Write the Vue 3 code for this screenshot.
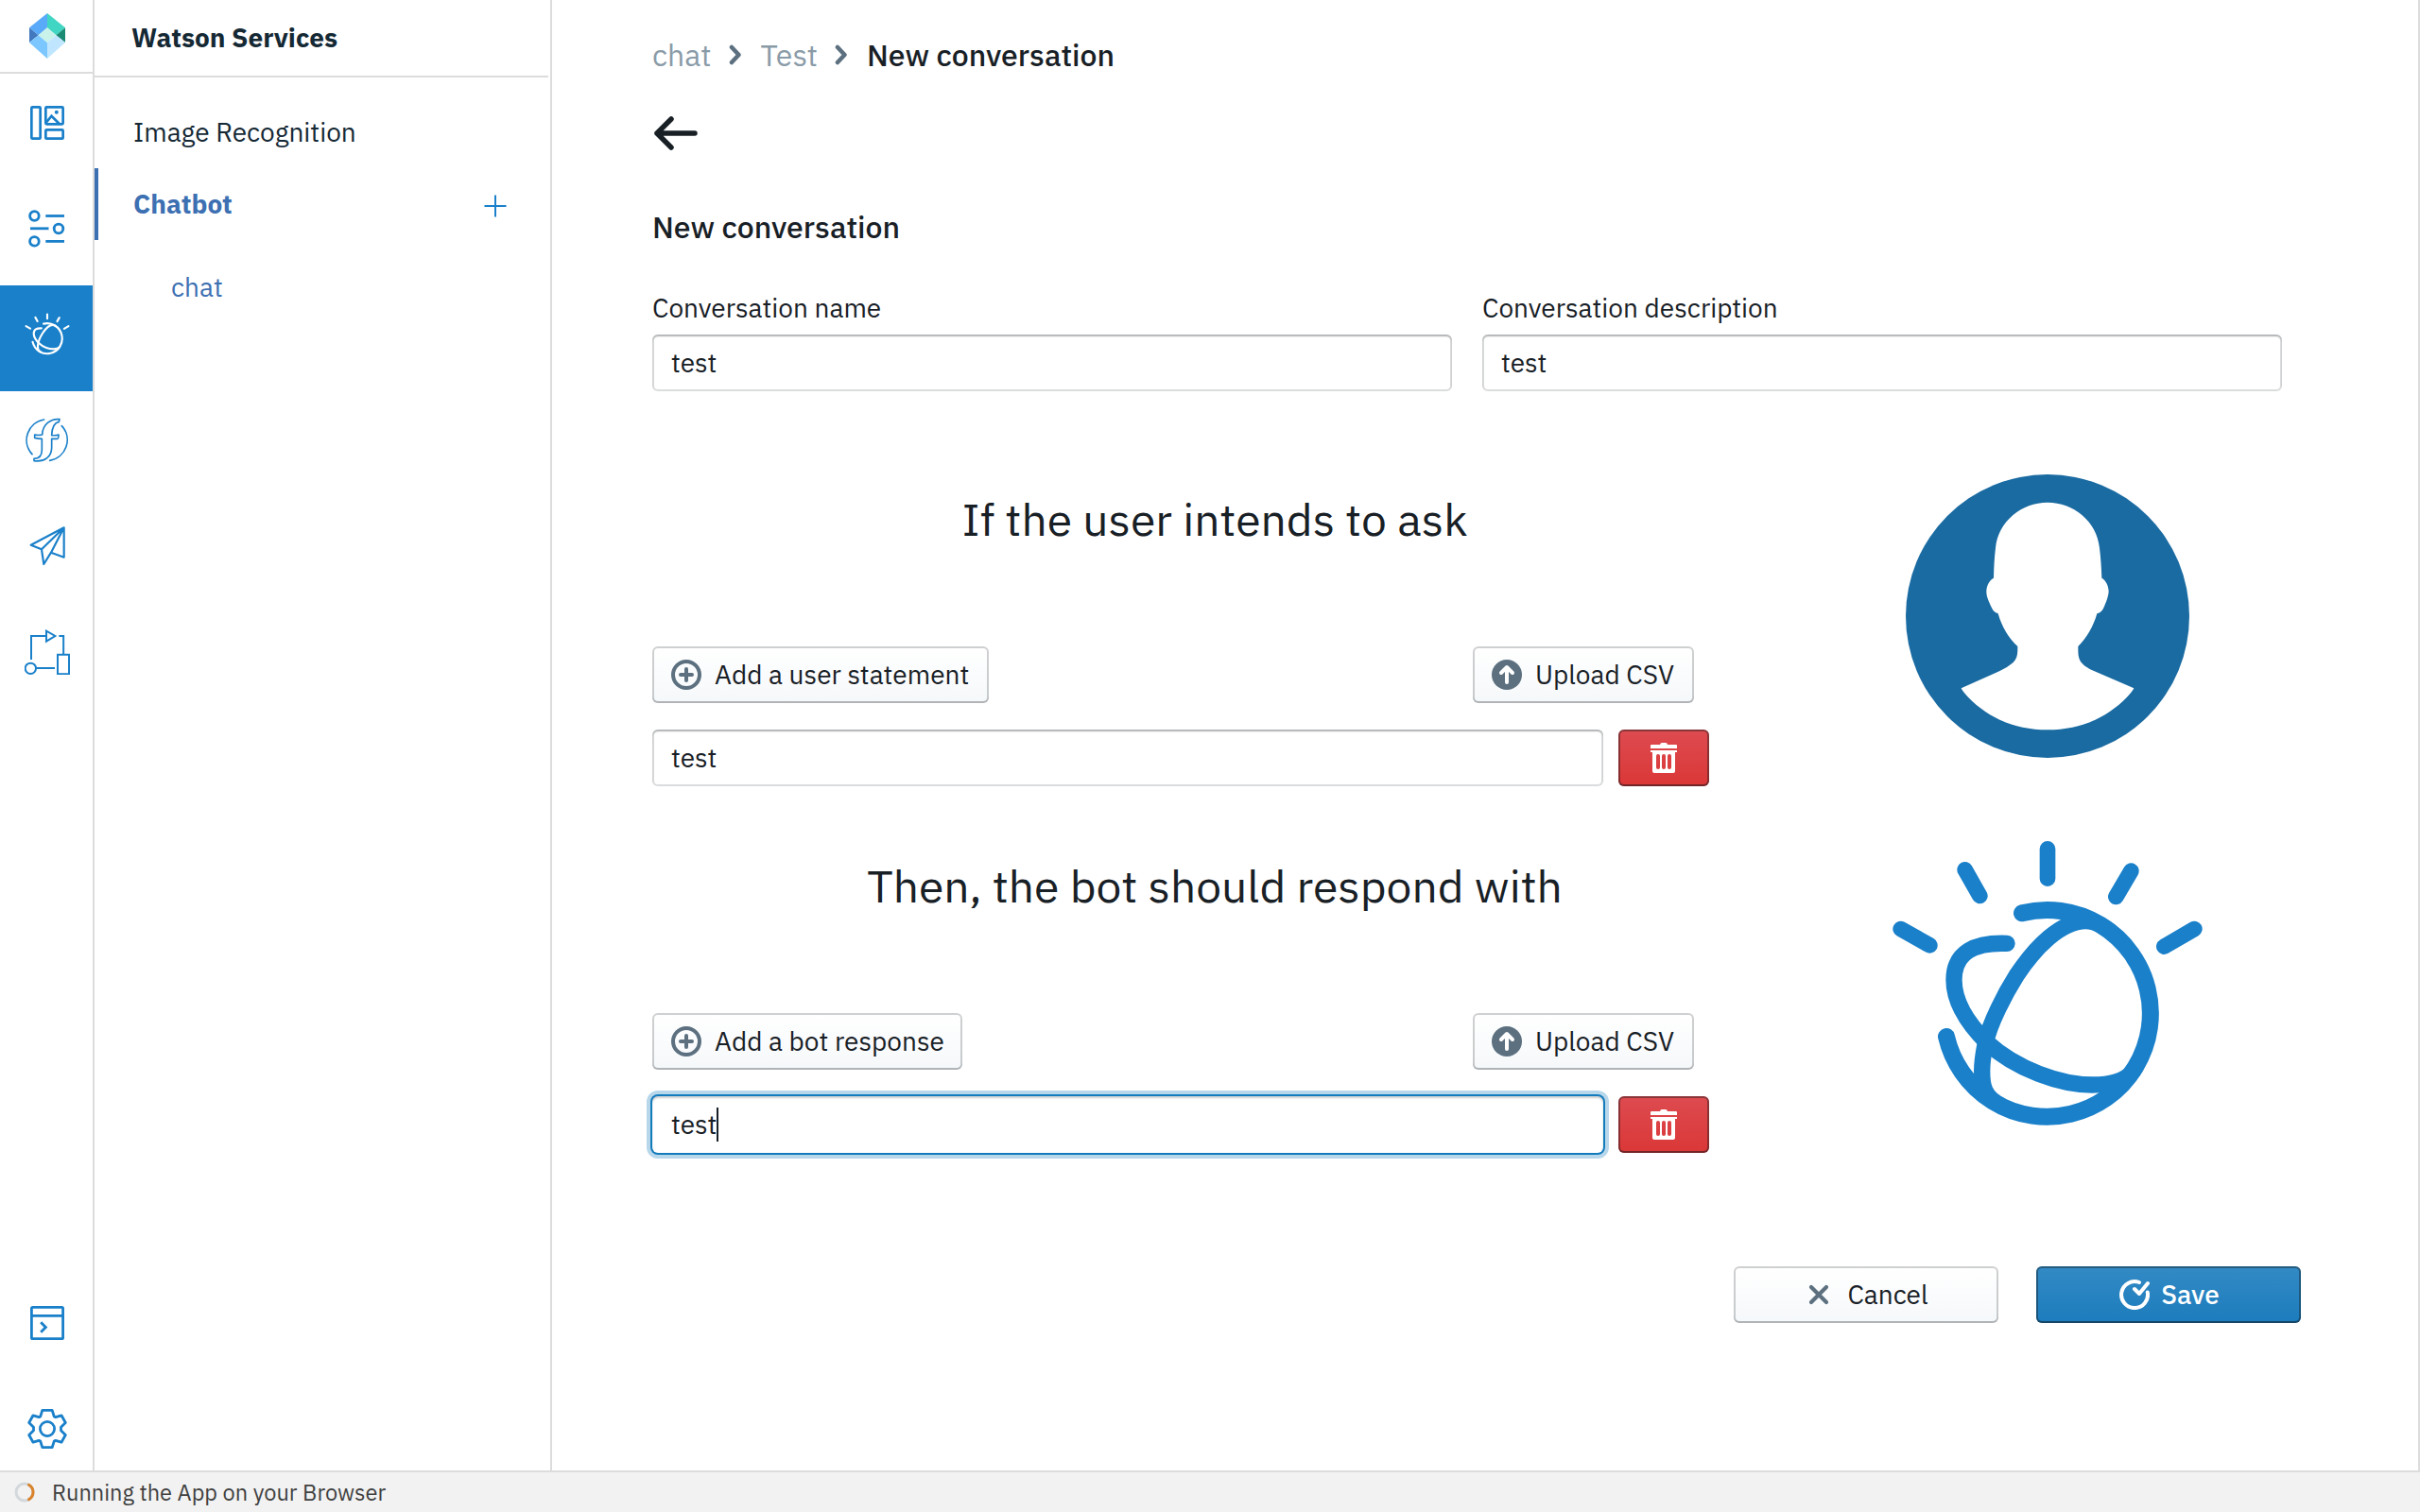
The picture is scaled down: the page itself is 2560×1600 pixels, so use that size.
<script setup>
import { ref } from 'vue'

const name = ref('test')
const description = ref('test')
const sections = ref([
  { title: 'If the user intends to ask', add: 'Add a user statement', width: 356, value: 'test', focused: false },
  { title: 'Then, the bot should respond with', add: 'Add a bot response', width: 328, value: 'test', focused: true }
])

// Watson mark, shared by the rail icon and the large figure
const rays = 'M558 84v94M296 150l47 83M823 154l-48 82M92 338l92 52M1024 338l-96 56'
const globe = 'M477 288A328 328 0 1 1 237 680'
const orbitUp = 'M410 899C355 870 350 835 350 790C350 760 354 735 360 705C372 640 425 540 460 485C520 395 600 314 680 313C705 313 725 323 745 337'
const orbitAcross = 'M429 384C330 380 261 410 261 500C261 590 335 668 365 698C460 785 600 833 700 833C765 833 805 820 830 789'
</script>

<template>
  <div class="app">
    <div class="body">
      <nav class="rail">
        <div class="logo">
          <svg width="38" height="48" viewBox="81 42 99 144" preserveAspectRatio="none">
            <path d="M130.5 42 81 88l25 24 24.500-24z" fill="#5aaafa" />
            <path d="M130.500 42 180 88l-25 24-24.500-24z" fill="#41d6c3" />
            <path d="M81 88l25 24-25 23z" fill="#4178be" />
            <path d="M180 88l-25 24 25 23z" fill="#1a8a73" />
            <path d="M130.500 88 155 112l-24.500 24L106 112z" fill="#c8f2ea" />
            <path d="M106 112 81 135l49.500 51v-50z" fill="#7cc7ff" />
            <path d="M155 112l25 23-49.500 51v-50z" fill="#c0e6ff" />
          </svg>
        </div>
        <a class="item">
          <svg width="48" height="48" viewBox="0 0 48 48" fill="none" stroke="currentColor" stroke-width="2.700">
            <rect x="7.350" y="7.350" width="9.300" height="33.300" rx="1" />
            <rect x="22.350" y="7.350" width="18.300" height="18" rx="1" />
            <rect x="22.350" y="31.350" width="18.300" height="9.300" rx="1" />
            <path d="M23 23.500l5.500-6.800 8.500 8.500" />
            <circle cx="33.800" cy="12.800" r="2" fill="currentColor" stroke="none" />
          </svg>
        </a>
        <a class="item">
          <svg width="48" height="48" viewBox="0 0 48 48" fill="none" stroke="currentColor" stroke-width="2.800">
            <circle cx="10.400" cy="10.500" r="4.800" /><path d="M22.300 10.500H42" />
            <path d="M6 23.800h19.500" /><circle cx="36" cy="24" r="4.800" />
            <circle cx="10.400" cy="37.400" r="4.800" /><path d="M22.300 37.400H42" />
          </svg>
        </a>
        <a class="item active">
          <svg width="48" height="45" viewBox="60 50 996 920" preserveAspectRatio="none" fill="none" stroke="currentColor" stroke-width="44" stroke-linecap="round">
            <path :d="rays" /><path :d="globe" /><path :d="orbitUp" /><path :d="orbitAcross" />
          </svg>
        </a>
        <a class="item">
          <svg width="48" height="48" viewBox="78 126 144 144" fill="none" stroke="currentColor" stroke-width="5" stroke-linecap="round" stroke-linejoin="round">
            <path d="M189 131C163 128 135 146 134 180Q122 183 110 180V190Q122 193 133 193V228C133 248 124 256 108 256V263C142 268 163 250 164 222V193H182Q186 193 186 180Q180 183 164 182C165 155 172 142 187 139Z" />
            <path d="M140 132A66 66 0 0 0 102 242M196 152A66 66 0 0 1 158 262" />
          </svg>
        </a>
        <a class="item">
          <svg width="48" height="48" viewBox="78 462 144 144" fill="none" stroke="currentColor" stroke-width="6.500" stroke-linejoin="round">
            <path d="M203 475 98 530l34 14 7 47 23-37 41 15zM203 475l-71 69M203 475l-41 79" />
          </svg>
        </a>
        <a class="item">
          <svg width="48" height="48" viewBox="78 798 144 144" fill="none" stroke="currentColor" stroke-width="6">
            <path d="M99 894v-75h47M147 803v33l28-17zM187 819h14.500v59" />
            <path d="M183 878.500h36v61h-36z" />
            <circle cx="97" cy="922" r="17" /><path d="M115 921h59" />
          </svg>
        </a>
        <div class="bottom">
          <a class="item small">
            <svg width="48" height="48" viewBox="0 0 48 48" fill="none" stroke="currentColor" stroke-width="2.800">
              <rect x="7.400" y="7.400" width="33.200" height="33.200" rx="1.200" />
              <path d="M7 16.300h34" /><path d="M17.200 23.200l5.200 5.200-5.200 5.400" />
            </svg>
          </a>
          <a class="item small">
            <svg width="48" height="48" viewBox="0 0 48 48" fill="none" stroke="currentColor" stroke-width="2.800" stroke-linejoin="round">
              <path d="M18.800 4.400H29.200L31.300 11L32.800 11.700L39 9.800L43.300 17.500L38.500 22.200V25.800L43.300 30.500L39 38.200L32.800 36.300L31.300 37L29.200 43.600H18.800L16.700 37L15.200 36.300L9 38.200L4.700 30.500L9.500 25.800V22.200L4.700 17.500L9 9.800L15.200 11.700L16.700 11Z" />
              <circle cx="24" cy="24" r="7.600" />
            </svg>
          </a>
        </div>
      </nav>

      <aside class="panel">
        <h2 class="panel-title">Watson Services</h2>
        <ul class="menu">
          <li class="entry">Image Recognition</li>
          <li class="entry current">
            <span>Chatbot</span>
            <svg width="24" height="24" viewBox="0 0 24 24" stroke="#1a80ca" stroke-width="2"><path d="M12 .500v23M.500 12h23" /></svg>
          </li>
          <li class="entry child">chat</li>
        </ul>
      </aside>

      <main class="main">
        <div class="crumbs">
          <span class="muted">chat</span>
          <svg class="chev" width="14" height="22" viewBox="0 0 14 22"><path d="M3 3l7.500 8L3 19" /></svg>
          <span class="muted">Test</span>
          <svg class="chev" width="14" height="22" viewBox="0 0 14 22"><path d="M3 3l7.500 8L3 19" /></svg>
          <span class="here">New conversation</span>
        </div>
        <svg class="back" width="48" height="40" viewBox="0 0 48 40"><path d="M20 5 5 20l15 15M5 20h40" /></svg>
        <h3 class="title">New conversation</h3>

        <div class="fields">
          <label class="field"><span>Conversation name</span><div class="input">{{ name }}</div></label>
          <label class="field"><span>Conversation description</span><div class="input">{{ description }}</div></label>
        </div>

        <div class="builder">
          <div class="steps">
            <section v-for="s in sections" :key="s.title" class="step">
              <h1>{{ s.title }}</h1>
              <div class="tools">
                <button class="btn" :style="{ width: s.width + 'px' }">
                  <svg width="32" height="32" viewBox="0 0 32 32" fill="none" stroke="#5c7080" stroke-width="4">
                    <circle cx="16" cy="16" r="14" /><path d="M16 10v12M10 16h12" stroke-linecap="round" />
                  </svg>
                  {{ s.add }}
                </button>
                <button class="btn upload">
                  <svg width="32" height="32" viewBox="0 0 32 32">
                    <circle cx="16" cy="16" r="16" fill="#5c7080" />
                    <path d="M16 24V8.500M10 14l6-6 6 6" fill="none" stroke="#fff" stroke-width="4" stroke-linecap="round" stroke-linejoin="round" />
                  </svg>
                  Upload CSV
                </button>
              </div>
              <div class="row">
                <div class="input grow" :class="{ focused: s.focused }">{{ s.value }}<i v-if="s.focused" class="caret"></i></div>
                <button class="btn danger">
                  <svg width="28" height="32" viewBox="0 0 28 32" fill="#fff">
                    <path d="M1 2h9q.500-2 2-2h4q1.500 0 2 2h9q1 0 1 1v3H0V3q0-1 1-1zM0 8h28v2H0z" />
                    <path fill-rule="evenodd" d="M2 10h24v20q0 2-2 2H4q-2 0-2-2zM6 14v12a2 2 0 0 0 4 0V14a2 2 0 0 0-4 0zM12 14v12a2 2 0 0 0 4 0V14a2 2 0 0 0-4 0zM18 14v12a2 2 0 0 0 4 0V14a2 2 0 0 0-4 0z" />
                  </svg>
                </button>
              </div>
            </section>
          </div>
          <div class="figures">
            <svg width="300" height="300" viewBox="108 66 900 900">
              <circle cx="558" cy="516" r="450" fill="#1a6ba2" />
              <path fill="#fff" d="M558 155C640 155 715 215 723 300Q728 340 730 395C744 402 752 422 752 438C750 458 744 470 738 485Q730 505 715 508C703 550 682 585 655 612C655 650 655 665 700 688L832 745Q828 755 810 773C745 840 660 877 558 877C456 877 371 840 306 773Q288 755 284 745L400 693C463 663 463 650 463 612C434 585 413 550 401 508Q386 503 381 490C372 470 364 455 364 438C364 422 372 402 387 395Q388 340 393 300C401 215 476 155 558 155Z" />
            </svg>
            <svg width="332" height="306" viewBox="60 50 996 918" fill="none" stroke="#1a80ca" stroke-linecap="round">
              <path stroke-width="50" :d="rays" />
              <path stroke-width="54" :d="globe" />
              <path stroke-width="52" :d="orbitUp" />
              <path stroke-width="52" :d="orbitAcross" />
            </svg>
          </div>
        </div>

        <div class="actions">
          <button class="btn wide">
            <svg width="32" height="32" viewBox="0 0 32 32"><path d="M8 8l16 16M24 8 8 24" stroke="#5c7080" stroke-width="4.200" stroke-linecap="round" /></svg>
            Cancel
          </button>
          <button class="btn wide primary">
            <svg width="32" height="32" viewBox="0 0 32 32" fill="none" stroke="#fff" stroke-width="4" stroke-linecap="round" stroke-linejoin="round">
              <path d="M21 3A14 14 0 1 0 29.800 13.500" /><path d="M16 10l5 5L30 4" />
            </svg>
            Save
          </button>
        </div>
      </main>
    </div>

    <footer class="status">
      <svg width="22" height="22" viewBox="0 0 22 22" fill="none" stroke-width="3">
        <circle cx="11" cy="11" r="9" stroke="#d3d8dc" />
        <path d="M15.500 3.200A9 9 0 0 1 15.500 18.800" stroke="#d9822b" stroke-linecap="round" />
      </svg>
      <span>Running the App on your Browser</span>
    </footer>
  </div>
</template>

<style>
body { margin: 0; background: #fff; }
</style>

<style scoped>
* { box-sizing: border-box; }
svg { display: block; flex: none; }
h1, h2, h3, ul { margin: 0; padding: 0; }
.app {
  display: flex; flex-direction: column;
  width: 2560px; height: 1600px; overflow: hidden;
  font-family: "IBM Plex Sans", Roboto, sans-serif;
  font-size: 28px; line-height: 36px; color: #182026;
}
.body { flex: 1; display: flex; min-height: 0; }

.rail { width: 100px; border-right: 2px solid #dcdcdc; display: flex; flex-direction: column; color: #1a80ca; }
.logo { height: 78px; padding-top: 14px; border-bottom: 2px solid #dcdcdc; display: flex; justify-content: center; padding-left: 2px; }
.item { height: 112px; padding-bottom: 8px; padding-left: 2px; display: flex; align-items: center; justify-content: center; }
.item.active { background: #1a80ca; color: #fff; padding-bottom: 9px; }
.bottom { margin-top: auto; display: flex; flex-direction: column; gap: 24px; }
.item.small { height: 88px; padding-bottom: 0; }

.panel { width: 484px; padding-right: 2px; border-right: 2px solid #dcdcdc; color: #152935; }
.panel-title { height: 82px; padding: 22px 39px; border-bottom: 2px solid #dcdcdc; font-size: 28px; line-height: 36px; font-weight: 700; }
.menu { list-style: none; padding-top: 20px; }
.entry { height: 76px; padding: 0 44px 0 41px; display: flex; align-items: center; justify-content: space-between; }
.entry.current { border-left: 4px solid #3d70b2; padding-left: 37px; color: #3d70b2; font-weight: 700; }
.entry.current svg { margin-top: 4px; }
.entry.child { margin-top: 12px; padding-left: 81px; color: #3d70b2; }

.main { flex: 1; padding: 38px 106px 0; border-right: 2px solid #dcdcdc; }
.crumbs { display: flex; align-items: center; height: 40px; font-size: 32px; }
.muted { color: #8a9ba8; }
.here { font-weight: 500; }
.chev { margin: 0 20px 0 18px; fill: none; stroke: #5c7080; stroke-width: 4.500; stroke-linecap: round; stroke-linejoin: round; }
.back { margin-top: 43px; fill: none; stroke: #182026; stroke-width: 5.500; stroke-linecap: round; stroke-linejoin: round; }
.title { margin-top: 59px; font-size: 32px; line-height: 40px; font-weight: 500; }

.fields { display: flex; gap: 32px; margin-top: 48px; width: 1724px; }
.field { flex: 1; display: flex; flex-direction: column; gap: 10px; }
.input {
  height: 60px; padding: 0 20px; border-radius: 6px; line-height: 60px; background: #fff;
  box-shadow: inset 0 0 0 2px rgba(16, 22, 26, .15), inset 0 2px 2px rgba(16, 22, 26, .2);
}
.input.focused { box-shadow: 0 0 0 2px #137cbd, 0 0 0 6px rgba(19, 124, 189, .3), inset 0 2px 2px rgba(16, 22, 26, .2); }
.caret { display: inline-block; width: 2px; height: 36px; vertical-align: -8px; background: #182026; }

.builder { display: flex; margin-top: 86px; }
.steps { width: 1190px; padding-top: 21px; display: flex; flex-direction: column; gap: 77px; }
.step { height: 311px; }
.step h1 { font-size: 48px; line-height: 56px; font-weight: 400; text-align: center; }
.tools { display: flex; justify-content: space-between; width: 1102px; margin-top: 107px; }
.row { display: flex; gap: 16px; margin-top: 28px; }
.grow { width: 1006px; }

.btn {
  height: 60px; padding: 0 20px; border: 0; border-radius: 6px;
  display: flex; align-items: center; gap: 14px; white-space: nowrap;
  font: inherit; color: inherit;
  background: linear-gradient(#fff, #f5f8fa);
  box-shadow: inset 0 0 0 2px rgba(16, 22, 26, .2), inset 0 -2px 0 rgba(16, 22, 26, .12);
}
.upload { width: 234px; }
.danger { width: 96px; justify-content: center; background: linear-gradient(#dd4b50, #db3737); box-shadow: inset 0 0 0 2px rgba(16, 22, 26, .4), inset 0 -2px 0 rgba(16, 22, 26, .2); }
.wide { width: 280px; justify-content: center; }
.primary {
  color: #fff; font-weight: 500; gap: 12px; padding-left: 22px;
  background: linear-gradient(#338ac4, #1c7cbd);
  box-shadow: inset 0 0 0 2px rgba(16, 22, 26, .4), inset 0 -2px 0 rgba(16, 22, 26, .2);
}
.figures { width: 572px; display: flex; flex-direction: column; align-items: center; gap: 85px; padding-top: 2px; }
.actions { display: flex; justify-content: flex-end; gap: 40px; width: 1744px; margin-top: 120px; }

.status { height: 44px; border-top: 2px solid #dcdcdc; background: #f2f2f2; display: flex; align-items: center; gap: 18px; padding-left: 15px; color: #404040; font-size: 23.550px; }
</style>
